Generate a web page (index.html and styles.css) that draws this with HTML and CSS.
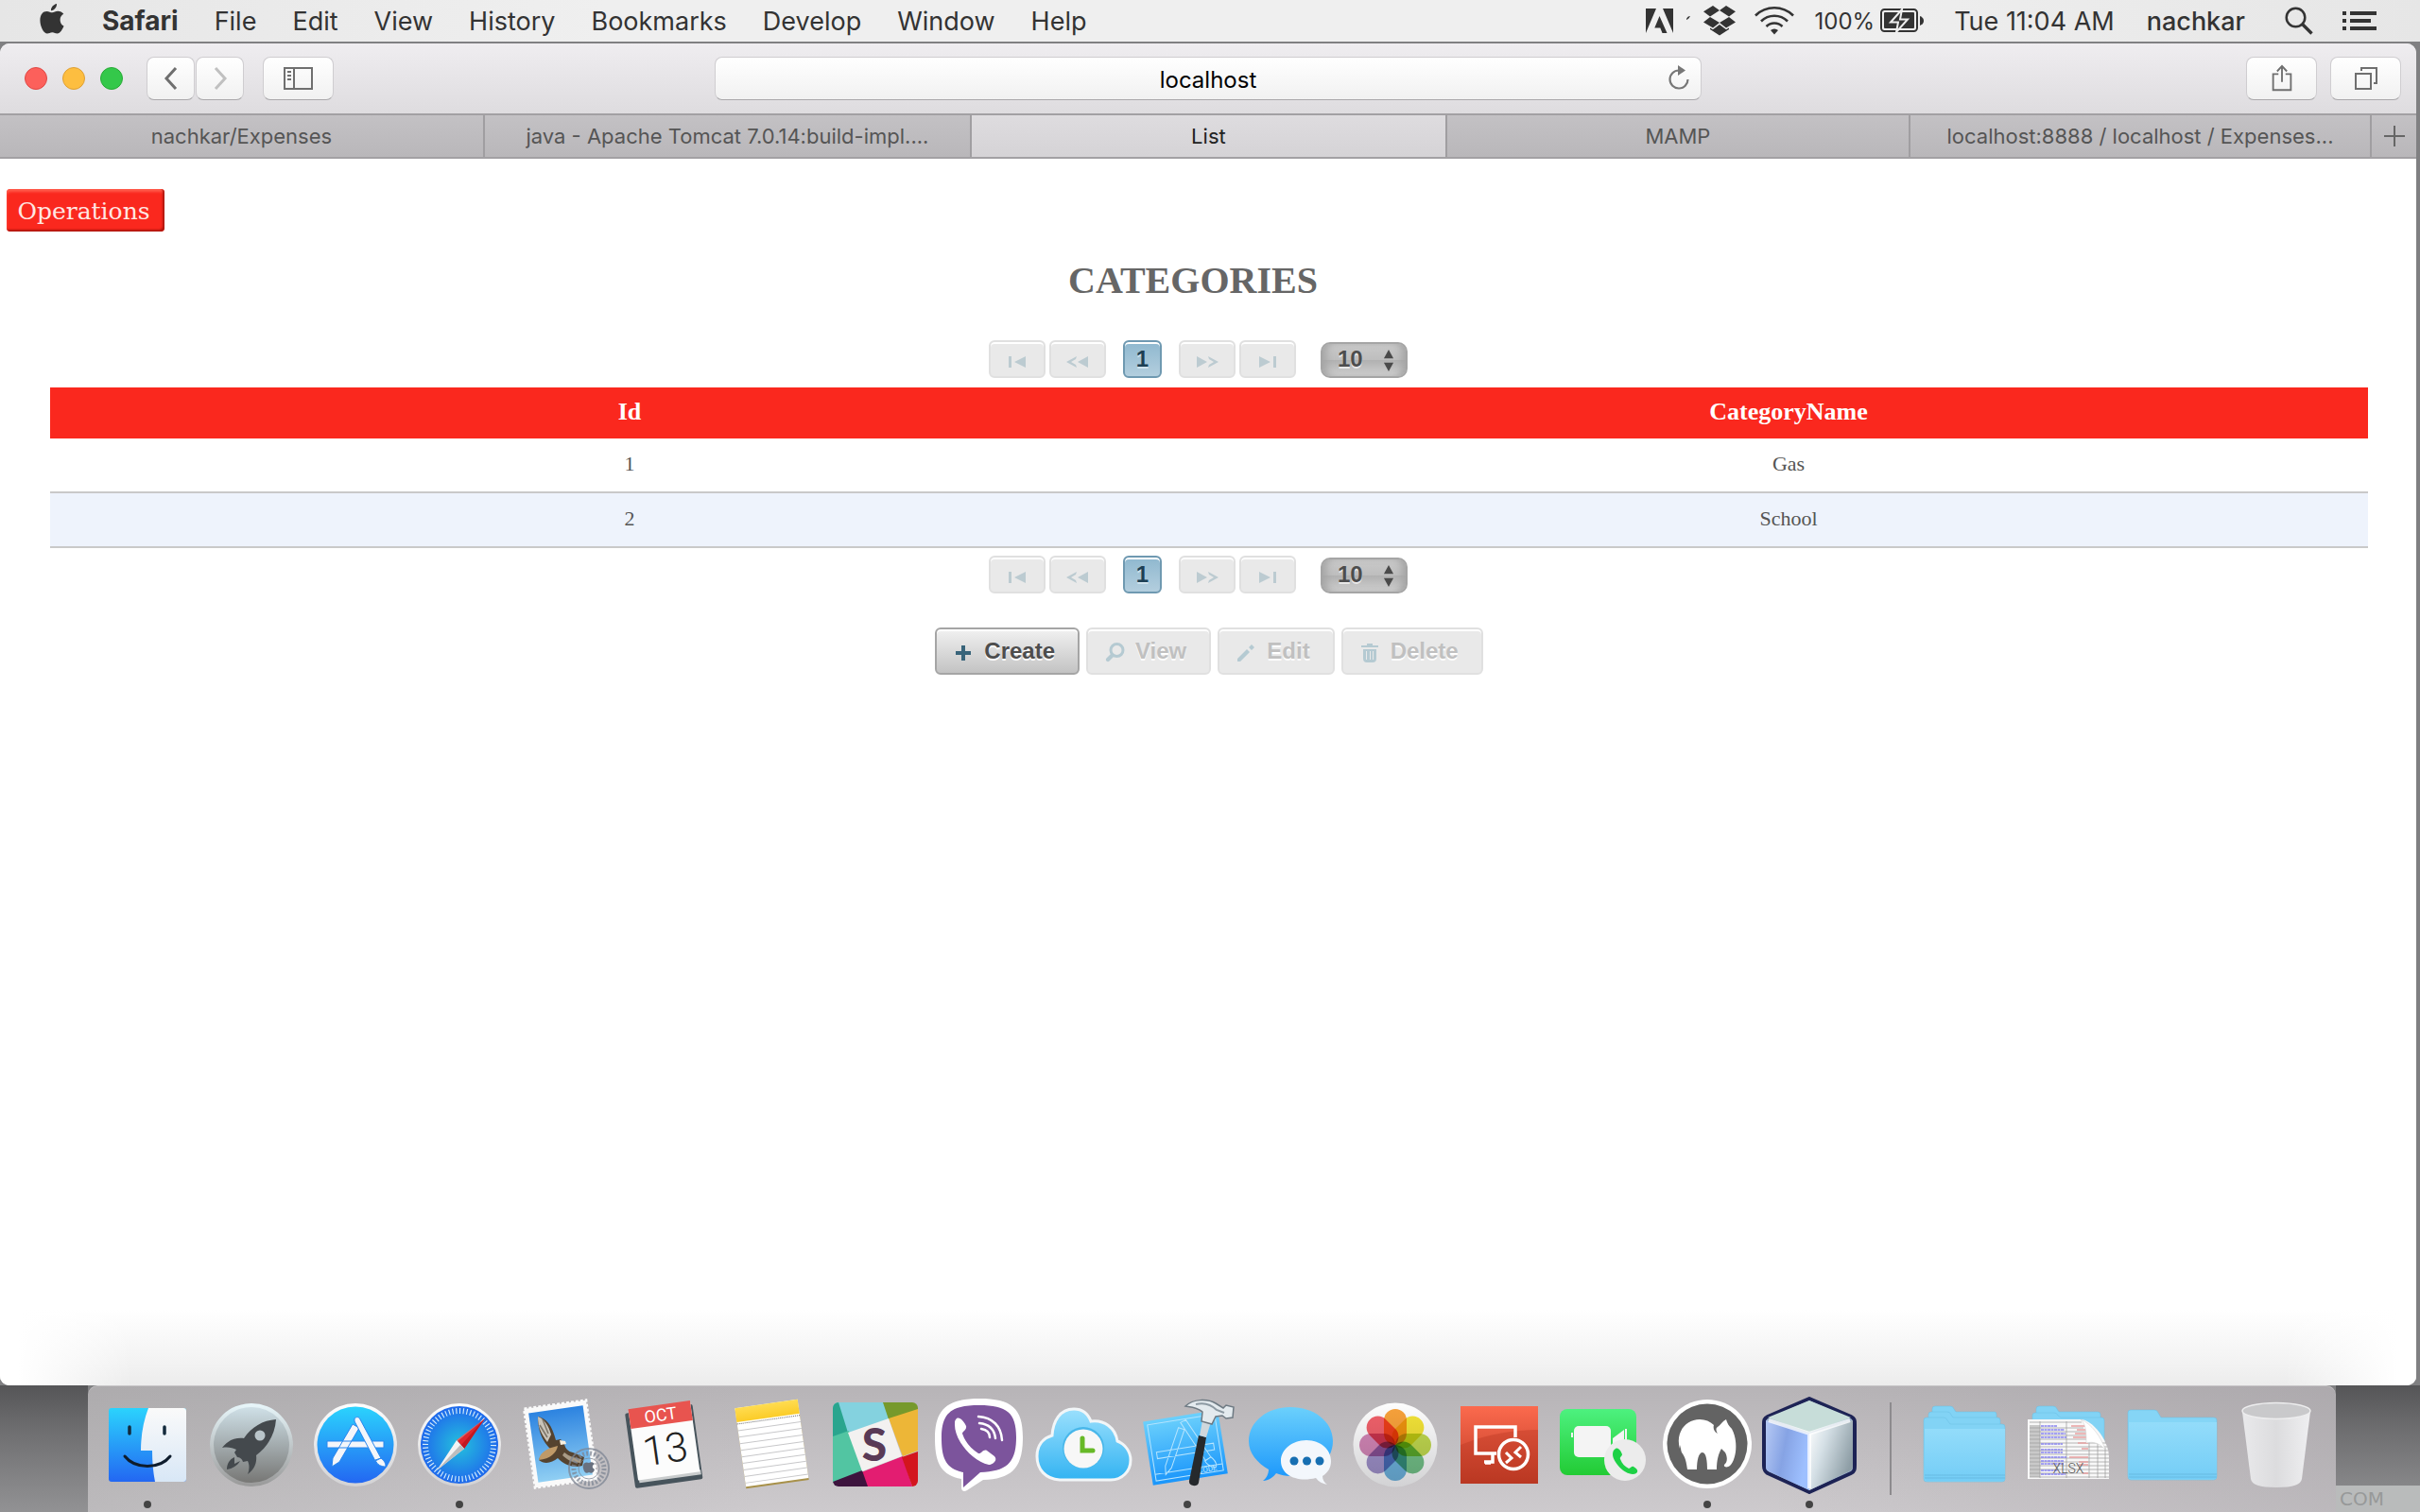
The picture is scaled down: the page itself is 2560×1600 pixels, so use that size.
FILE: index.html
```html
<!DOCTYPE html>
<html lang="en">
<head>
<meta charset="utf-8">
<title>List</title>
<link rel="stylesheet" href="styles.css">
</head>
<body>
<header class="menubar">
  <nav class="menus">
    <svg class="apple" viewBox="0 0 26 32"><path d="M18 0c.3 3.400-2.600 7.300-6 7.200C11.600 4 14.700.6 18 0zM21.600 16.900c0-3 1.600-4.900 3.700-6.100-1.500-2.100-3.700-3-6-3-2.600 0-4.300 1.500-6 1.500-1.700 0-3.600-1.400-5.800-1.400C3.500 7.900.4 11.200.4 17.400.4 24 4.300 31.500 8 31.500c1.900 0 3-1.300 5.300-1.300 2.300 0 3.200 1.300 5.200 1.300 3.200 0 5.900-5 7-8-2.500-1.100-3.900-3.700-3.900-6.600z"/></svg>
    <strong>Safari</strong><span>File</span><span>Edit</span><span>View</span><span>History</span><span>Bookmarks</span><span>Develop</span><span>Window</span><span>Help</span>
  </nav>
  <div class="status">
    <svg class="i-adobe" viewBox="0 0 50 26"><path d="M0 0h11L0 26zM18 0h11v26zM14.500 8l8 18h-5l-2.200-5.500h-6z"/><path d="M43 11c1-2 2-3 4-3-1 2-2 3-4 4z"/></svg>
    <svg class="i-dropbox" viewBox="0 0 34 32"><path d="M10 0l7 5-10 6.500L0 6.200zM24 0l10 6.200-7 5.300L17 5zM7 12l10 6-7 5.500-10-6zM27 12l-10 6 7 5.500 10-6zM7 23.500l3 1.700 7-5.200 7 5.200 3-1.700v1.500L17 31.500 7 25z"/></svg>
    <svg class="i-wifi" viewBox="0 0 42 30"><g fill="none" stroke="#333" stroke-width="2.600"><path d="M1 9.500a28.500 28.500 0 0 1 40 0"/><path d="M7 15.500a20 20 0 0 1 28 0"/><path d="M12.500 21a12 12 0 0 1 17 0"/></g><path d="M21 29.500l-4-4.500a6 6 0 0 1 8 0z"/></svg>
    <span class="battery"><span class="pct">100%</span><svg class="i-batt" viewBox="0 0 46 26"><rect x="1" y="1" width="38" height="23" rx="3.500" fill="none" stroke="#333" stroke-width="2"/><rect x="4" y="4" width="32" height="17" rx="1"/><path d="M42 8c3 1 4 3 4 5s-1 4-4 5z"/><path d="M23 1L11 14.500h8L17 25l12-13.500h-8z" stroke="#eee" stroke-width="2"/></svg></span>
    <span>Tue 11:04 AM</span>
    <span class="user">nachkar</span>
    <svg class="i-search" viewBox="0 0 30 30"><g fill="none" stroke="#333"><circle cx="11.500" cy="11.500" r="9.800" stroke-width="2.500"/><path d="M18.500 18.500L28.500 28.500" stroke-width="3.400"/></g></svg>
    <svg class="i-list" viewBox="0 0 36 22"><path d="M0 1h4v4H0zM8 1h28v4H8zM0 9h4v4H0zM8 9h22v4H8zM0 17h4v4H0zM8 17h28v4H8z"/></svg>
  </div>
</header>

<section class="window">
  <div class="toolbar">
    <div class="tools">
      <span class="light red"></span><span class="light yellow"></span><span class="light green"></span>
      <button class="tool back" aria-label="Back"><svg viewBox="0 0 16 26"><path d="M13 2L3 13l10 11" stroke-width="3"/></svg></button>
      <button class="tool forward" aria-label="Forward"><svg viewBox="0 0 16 26"><path d="M3 2l10 11L3 24" stroke-width="3"/></svg></button>
      <button class="tool wide" aria-label="Sidebar"><svg class="w32" viewBox="0 0 32 26"><path d="M1 2h29v22H1zM11 2v22M4 6h4M4 10h4M4 14h4" stroke-width="2"/></svg></button>
    </div>
    <div class="address">
      <input type="text" value="localhost" aria-label="Address">
      <svg class="reload" viewBox="0 0 24 28"><path d="M12 6.500A9.500 9.500 0 1 0 21.500 16" fill="none" stroke="#777" stroke-width="2.200"/><path d="M11 1v11l8-5.500z" fill="#777"/></svg>
    </div>
    <div class="tools end">
      <button class="tool wide" aria-label="Share"><svg class="w24" viewBox="0 0 24 32"><path d="M8 11H2v18h20V11h-6M12 20V2M6.500 8L12 2l5.500 6" stroke-width="2"/></svg></button>
      <button class="tool wide" aria-label="Show all tabs"><svg class="w24" viewBox="0 0 24 26"><path d="M1 8h16v16H1zM7 5V2h16v16h-3" stroke-width="2"/></svg></button>
    </div>
  </div>
  <nav class="tabs">
    <a href="#" class="t513">nachkar/Expenses</a>
    <a href="#" class="t515">java - Apache Tomcat 7.0.14:build-impl....</a>
    <a href="#" class="t503 active">List</a>
    <a href="#" class="t490">MAMP</a>
    <a href="#" class="t488">localhost:8888 / localhost / Expenses...</a>
    <button class="newtab" aria-label="New tab"><svg viewBox="0 0 22 22"><path d="M11 0v22M0 11h22" stroke="#666" stroke-width="2"/></svg></button>
  </nav>
  <main class="page">
    <button class="operations">Operations</button>
    <div class="content">
      <h1>CATEGORIES</h1>
      <div class="pager">
        <button disabled aria-label="First"><svg viewBox="0 0 24 14"><path d="M3 1h3v12H3zM21 1v12L9 7z"/></svg></button>
        <button disabled aria-label="Previous"><svg viewBox="0 0 24 14"><path d="M23 1v12L12 7zM11 1L0 7l11 6-1-3-5-3 5-3z"/></svg></button>
        <button class="current">1</button>
        <button disabled aria-label="Next"><svg viewBox="0 0 24 14"><path d="M1 1v12l11-6zM13 1l11 6-11 6 1-3 5-3-5-3z"/></svg></button>
        <button disabled aria-label="Last"><svg viewBox="0 0 24 14"><path d="M3 1v12l12-6zM18 1h3v12h-3z"/></svg></button>
        <span class="rows"><select aria-label="Rows per page"><option>10</option></select><svg viewBox="0 0 12 26"><path d="M6 1l5.500 10H.5zM6 26l5.500-10H.5z"/></svg></span>
      </div>
      <table>
        <thead><tr><th>Id</th><th>CategoryName</th></tr></thead>
        <tbody><tr><td>1</td><td>Gas</td></tr><tr><td>2</td><td>School</td></tr></tbody>
      </table>
      <div class="pager lower">
        <button disabled aria-label="First"><svg viewBox="0 0 24 14"><path d="M3 1h3v12H3zM21 1v12L9 7z"/></svg></button>
        <button disabled aria-label="Previous"><svg viewBox="0 0 24 14"><path d="M23 1v12L12 7zM11 1L0 7l11 6-1-3-5-3 5-3z"/></svg></button>
        <button class="current">1</button>
        <button disabled aria-label="Next"><svg viewBox="0 0 24 14"><path d="M1 1v12l11-6zM13 1l11 6-11 6 1-3 5-3-5-3z"/></svg></button>
        <button disabled aria-label="Last"><svg viewBox="0 0 24 14"><path d="M3 1v12l12-6zM18 1h3v12h-3z"/></svg></button>
        <span class="rows"><select aria-label="Rows per page"><option>10</option></select><svg viewBox="0 0 12 26"><path d="M6 1l5.500 10H.5zM6 26l5.500-10H.5z"/></svg></span>
      </div>
      <div class="actions">
        <button><svg viewBox="0 0 24 24"><path d="M10 4h4v6h6v4h-6v6h-4v-6H4v-4h6z" fill="#38647a"/></svg>Create</button>
        <button disabled><svg viewBox="0 0 24 24"><circle cx="14.500" cy="9" r="6.500" fill="none" stroke="#b5cad2" stroke-width="3"/><path d="M9.500 11.500l3 3-6 6c-2 2-5-1-3-3z"/></svg>View</button>
        <button disabled><svg viewBox="0 0 24 24"><path d="M3 18L13 8l3 3L6 21H3zM15 6l3-3 3 3-3 3z"/></svg>Edit</button>
        <button disabled><svg viewBox="0 0 24 24"><path d="M3 4h6V2h6v2h6v2H3zM5 8h14v10q0 4-4 4H9q-4 0-4-4zM8 10v9h1v-9zM12 10v9h1v-9zM16 10v9h-1v-9z" fill-rule="evenodd"/></svg>Delete</button>
      </div>
    </div>
  </main>
</section>

<footer class="desktop">
<span class="side"></span>
<div class="dock">
  <svg class="app" viewBox="0 0 110 134">
    <defs>
      <linearGradient id="blue" x2="0" y2="1"><stop stop-color="#2bd3fd"/><stop offset="1" stop-color="#2367f2"/></linearGradient>
      <linearGradient id="pale" x2="0" y2="1"><stop stop-color="#fafafa"/><stop offset="1" stop-color="#d8e7f6"/></linearGradient>
      <linearGradient id="steel" x2="0" y2="1"><stop stop-color="#cfe0e7"/><stop offset="1" stop-color="#777775"/></linearGradient>
      <linearGradient id="rim" x2="0" y2="1"><stop stop-color="#e8f7fb"/><stop offset="1" stop-color="#999"/></linearGradient>
      <linearGradient id="wrim" x2="0" y2="1"><stop stop-color="#fdfdfd"/><stop offset="1" stop-color="#d2d2d4"/></linearGradient>
      <linearGradient id="sky" x2="0" y2="1"><stop stop-color="#2c83e0"/><stop offset="1" stop-color="#90cff3"/></linearGradient>
      <linearGradient id="cloud" x2="0" y2="1"><stop stop-color="#9be0fd"/><stop offset="1" stop-color="#33b3f2"/></linearGradient>
      <linearGradient id="msg" x2="0" y2="1"><stop stop-color="#6bd0fc"/><stop offset="1" stop-color="#1a96fb"/></linearGradient>
      <linearGradient id="rdp" x2="0" y2="1"><stop stop-color="#fb6a4e"/><stop offset="1" stop-color="#bd3a24"/></linearGradient>
      <linearGradient id="green" x2="0" y2="1"><stop stop-color="#4df17f"/><stop offset="1" stop-color="#22cb34"/></linearGradient>
      <linearGradient id="folder" x2="0" y2="1"><stop stop-color="#93dcfa"/><stop offset="1" stop-color="#74cdf6"/></linearGradient>
      <linearGradient id="yellow" x2="0" y2="1"><stop stop-color="#ffdc51"/><stop offset="1" stop-color="#fbcc28"/></linearGradient>
      <linearGradient id="cubeL" x2="1" y2=".3"><stop stop-color="#b6c9f4"/><stop offset=".5" stop-color="#86a3e4"/><stop offset="1" stop-color="#9ec0ff"/></linearGradient>
      <linearGradient id="cubeR" x2="1" y2=".5"><stop stop-color="#fff"/><stop offset=".4" stop-color="#d5e0e6"/><stop offset="1" stop-color="#8e9ea6"/></linearGradient>
      <linearGradient id="bin"><stop stop-color="#e9e9eb"/><stop offset=".5" stop-color="#dcdcde"/><stop offset="1" stop-color="#efeff1"/></linearGradient>
      <radialGradient id="compass"><stop stop-color="#24c1dd"/><stop offset="1" stop-color="#1f69ec"/></radialGradient>
    </defs>
    <rect x="14" y="24" width="82" height="78" rx="3" fill="url(#blue)"/><path d="M56 24h37a3 3 0 0 1 3 3v72a3 3 0 0 1-3 3H63c-2-10-3-21-3-33H48c0-17 3-32 8-45z" fill="url(#pale)"/><path d="M36 44v7M73 44v7" stroke="#132a3c" stroke-width="3.500" stroke-linecap="round"/><path d="M31 75c11 14 37 14 48 0" fill="none" stroke="#0e1c2c" stroke-width="3" stroke-linecap="round"/><circle class="dot" cx="55" cy="126" r="4"/>
  </svg>
  <svg class="app" viewBox="0 0 110 134"><circle cx="55" cy="63" r="44" fill="url(#rim)"/><circle cx="55" cy="63" r="40" fill="url(#steel)"/><path d="M81 36c-14 1-26 8-34 20-9-1-17 2-23 10 6-1 11 0 15 2l-2 3 3 5c3 0 5 2 6 5l5-1c2 4 2 9 0 14 7-5 10-12 9-20 12-9 20-22 21-38z" fill="#44494d"/><circle cx="64" cy="53" r="5.500" fill="#b9c4c9"/><path d="M37 76c-5 2-8 7-8 13 6-1 11-4 14-9l-6 3z" fill="#44494d"/></svg>
  <svg class="app" viewBox="0 0 110 134"><circle cx="55" cy="63" r="44" fill="url(#wrim)"/><circle cx="55" cy="63" r="40.500" fill="url(#blue)"/><g fill="#f4f6fa"><path d="M25 59h60v7H25zM52 41l7 4-21 36-8 5 1-9z" stroke="#2a86ee"/><path d="M54 35c2-2 5-2 6 1l22 41-6 3-22-42zM76 79l6-2c4 3 5 6 5 9-5 0-9-2-11-7z" stroke="#2a86ee"/></g></svg>
  <svg class="app" viewBox="0 0 110 134"><circle cx="55" cy="63" r="44" fill="url(#wrim)"/><circle cx="55" cy="63" r="41" fill="url(#compass)"/><circle cx="55" cy="63" r="36" fill="none" stroke="#d6edfb" stroke-width="6" pathLength="120" stroke-dasharray=".6 1.400"/><path d="M82 35L60 67l-7-8z" fill="#e0262d"/><path d="M82 35L53 59l-1-1z" fill="#ff5b52"/><path d="M82 35L60 67l-3-4z" fill="#c21820"/><path d="M31 90l21-32 8 9z" fill="#f3f3f3"/><path d="M31 90l29-23-4-4z" fill="#bdbdbd"/><circle class="dot" cx="55" cy="126" r="4"/></svg>
  <svg class="app" viewBox="0 0 110 134"><g transform="rotate(-8 52 62)"><rect x="19" y="20" width="66" height="84" fill="#fafafa" stroke="#fafafa" stroke-width="3" stroke-dasharray="3 2"/><rect x="23" y="25" width="58" height="74" fill="url(#sky)"/></g><path d="M28 33c9 2 15 9 19 25l5-1 4 5c1 5 4 8 9 9l12 5-2 9c-10 3-19-1-26-8-6 5-14 7-20 2 2-6 7-10 12-12-8-8-13-18-13-34z" fill="#55432f"/><path d="M28 33c7 3 11 9 14 19l-4 8c-6-8-10-15-10-27z" fill="#c9c3b8"/><path d="M33 36l6 15M30 42l8 13" stroke="#7d7568" stroke-width="1.500"/><path d="M51 58l6 1 1 3-6 1z" fill="#f7efe0"/><path d="M49 64c-1 7-8 14-20 15 1-7 7-11 13-13z" fill="#c09a68"/><path d="M56 71c5 4 11 6 18 7l-1 4c-8 0-14-3-19-8z" fill="#a99b86"/><g fill="none" stroke="#7e8694" opacity=".75"><circle cx="82" cy="88" r="21" stroke-width="2"/><circle cx="82" cy="88" r="16" stroke-width="5" stroke-dasharray="2 2"/><circle cx="82" cy="88" r="11"/></g><path d="M82 82c-5-2-7 2-6 6s3 6 6 4c3 2 5 0 6-3-3-2-3-4 0-6-2-2-4-2-6-1z" fill="#69717f"/></svg>
  <svg class="app" viewBox="0 0 110 134"><g transform="rotate(-8 54 62)"><rect x="15" y="24" width="72" height="80" rx="2" fill="#47545c"/><rect x="20" y="94" width="66" height="5" fill="#c9cccd"/><rect x="19" y="22" width="66" height="74" fill="#fcfcfc"/><rect x="19" y="20" width="66" height="21" fill="#e8544f"/><text x="52" y="37" class="cal-month">OCT</text><text x="52" y="82" class="cal-day">13</text></g></svg>
  <svg class="app" viewBox="0 0 110 134"><g transform="rotate(-8 56 62)"><rect x="22" y="21" width="67" height="84" fill="#a8914a"/><rect x="22" y="19" width="67" height="84" fill="#fff"/><rect x="22" y="19" width="67" height="15" fill="url(#yellow)"/><path d="M22 36h67" stroke="#666" stroke-dasharray="1 1"/><path d="M22 43h67M22 50h67M22 57h67M22 64h67M22 71h67M22 78h67M22 85h67M22 92h67M22 99h67" stroke="#c8c8ca"/></g></svg>
  <svg class="app" viewBox="0 0 110 134"><clipPath id="sq"><rect x="10" y="18" width="90" height="89" rx="6"/></clipPath><g clip-path="url(#sq)"><path fill="#84d2df" d="M10 18h60v32H10z"/><path fill="#2aa58e" d="M10 18h6l10 32-16 6z"/><path fill="#76992b" d="M63 18h37v8L69 36z"/><path fill="#edb637" d="M100 25L69 35l15 40 16-6z"/><path fill="#52c5a2" d="M10 54l17-6 15 43-32 12z"/><path fill="#e31d71" d="M40 92l44-17 10 32H45z"/><path fill="#d3151e" d="M83 76l17-6v37h-6z"/><path fill="#3d143e" d="M10 102l31-12 6 17H10z"/><path fill="#f3f1f0" d="M26 50l43-15 14 40-42 16z"/></g><text x="54" y="80" class="slack">S</text></svg>
  <svg class="app" viewBox="0 0 110 134"><path d="M55 14c34 0 46 10 46 41 0 33-12 44-42 45L42 111c-3 2-6 1-6-3v-9C15 95 8 83 8 56c0-31 13-42 47-42z" fill="#fff"/><path d="M55 21c29 0 39 8 39 34 0 27-10 36-38 37L38 108V92C20 88 15 78 15 56c0-27 10-35 40-35z" fill="#7c549c"/><path d="M31 35c4-2 8 4 10 8 1 4-4 6-4 8 3 9 9 16 17 21 3 1 5-5 9-3l8 6c4 4-2 9-6 9C47 80 29 58 29 42c0-4 0-5 2-7z" fill="#fff"/><g fill="none" stroke="#fff" stroke-width="2.500" stroke-linecap="round"><path d="M54 33c15 1 24 10 25 25M55 40c11 1 16 7 17 16M57 46c6 1 9 4 9 9"/></g></svg>
  <svg class="app" viewBox="0 0 110 134"><path d="M30 100C15 99 6 89 6 75c0-11 6-19 16-22 1-15 8-28 23-28 9 0 15 5 18 13 14-2 26 7 28 21 8 3 14 11 14 20 0 12-9 21-21 21z" fill="url(#cloud)" stroke="#f2f6f8" stroke-width="3"/><circle cx="55" cy="66" r="22" fill="#48b7ea"/><circle cx="55" cy="67" r="20.500" fill="#f7f7f7"/><path d="M54 56v13h11" fill="none" stroke="#67b927" stroke-width="5" stroke-linecap="round"/></svg>
  <svg class="app" viewBox="0 0 110 134"><g transform="rotate(-9 52 66)"><rect x="13" y="32" width="80" height="68" fill="url(#msg)"/><g fill="none" stroke="#b6e4fd"><rect x="17" y="36" width="72" height="60"/><path d="M22 66h61v7H22zM49 44l6 3-20 38-7 6 1-9zM52 39l6-2 20 43-6 3zM71 83l7-3c4 4 5 8 4 11-5 0-9-3-11-8zM17 89h72"/></g><text x="70" y="95" class="xcode">XCODE</text></g><path d="M67 53l8 2-8 48c-1 5-11 4-10-2z" fill="#26292c"/><path d="M73 27l10 2-8 26-7-2z" fill="#cfd7dc"/><path d="M53 22c8-8 24-8 32-3l8 5 3-3 8 2-1 11-7 1-4-3-7 1-4 8-11-3 1-10c-6-5-12-5-18-6z" fill="#e3eaee" stroke="#6e7a83" stroke-width="1.500"/><path d="M64 20c8-2 16 0 22 6l8 3" fill="none" stroke="#8d9aa3" stroke-width="2"/><circle class="dot" cx="55" cy="126" r="4"/></svg>
  <svg class="app" viewBox="0 0 110 134"><path d="M54 23c25 0 45 15 45 36S79 96 54 96c-5 0-10-1-15-3-3 4-8 8-14 8 4-3 6-8 6-12-12-7-21-17-21-30 0-21 20-36 44-36z" fill="url(#msg)"/><path d="M71 58c15 0 26 10 26 22 0 7-3 12-9 16 0 4 2 7 5 9-5-1-9-3-12-7-20 5-37-3-37-18 0-12 12-22 27-22z" fill="#f3f7fc"/><g fill="#176fb2"><circle cx="58" cy="80" r="4.500"/><circle cx="71.500" cy="80" r="4.500"/><circle cx="85" cy="80" r="4.500"/></g></svg>
  <svg class="app petals" viewBox="0 0 110 134"><circle cx="55" cy="63" r="44.500" fill="url(#wrim)"/><rect x="43" y="25" width="24" height="38" rx="12" fill="#f9a33b"/><rect x="43" y="25" width="24" height="38" rx="12" fill="#f4e437" transform="rotate(45 55 63)"/><rect x="43" y="25" width="24" height="38" rx="12" fill="#c2da4f" transform="rotate(90 55 63)"/><rect x="43" y="25" width="24" height="38" rx="12" fill="#74c389" transform="rotate(135 55 63)"/><rect x="43" y="25" width="24" height="38" rx="12" fill="#6fb5e0" transform="rotate(180 55 63)"/><rect x="43" y="25" width="24" height="38" rx="12" fill="#a092cb" transform="rotate(225 55 63)"/><rect x="43" y="25" width="24" height="38" rx="12" fill="#d487b7" transform="rotate(270 55 63)"/><rect x="43" y="25" width="24" height="38" rx="12" fill="#f2616b" transform="rotate(315 55 63)"/></svg>
  <svg class="app" viewBox="0 0 110 134"><rect x="14" y="22" width="82" height="82" fill="url(#rdp)"/><path d="M14 63c25-10 52-16 82-16v57H14z" fill="#b5341f" opacity=".35"/><g fill="none" stroke="#fff" stroke-width="3.500"><path d="M72 55V44H30v28h22M48 72v9h-9M46 82h-6"/><circle cx="70" cy="73" r="15.500"/></g><path d="M62 71l6 6-6 5M78 65l-6 6 6 5" fill="none" stroke="#fff" stroke-width="3"/></svg>
  <svg class="app" viewBox="0 0 110 134"><rect x="9" y="25" width="81" height="70" rx="8" fill="url(#green)"/><rect x="24" y="43" width="39" height="33" rx="5" fill="#f4f4f4"/><path d="M65 56l12-9v23l-12-9zM78 46h2v24h-2zM21 50h2v5h-2z" fill="#f4f4f4"/><circle cx="78" cy="79" r="22" fill="#ececec"/><path d="M68 67c3-2 6 3 7 6 0 2-3 3-2 5 2 5 5 8 9 10 2 0 3-3 5-2 3 2 6 4 3 7-9 5-25-11-25-20 0-3 1-5 3-6z" fill="#1ed146"/></svg>
  <svg class="app" viewBox="0 0 110 134"><circle cx="55" cy="62" r="47" fill="#fff"/><circle cx="55" cy="62" r="42.500" fill="#636363"/><path d="M28 71c-1-2-1-5-1-8l-1 4c-5-17 6-31 21-31 6 0 11 2 15 6-1 3 0 7 4 9-2-3-2-6 0-7 3-2 5-6 9-8 1 4 3 7 6 10 7 13 5 32-2 39-2 2-7 2-6-1 3-2 4-7 1-13l-4-4c-3 5-5 12-5 22H55c0-8-1-18-5-18s-6 8-6 18H34c-1-7-2-13-6-18z" fill="#fff"/><circle class="dot" cx="55" cy="126" r="4"/></svg>
  <svg class="app" viewBox="0 0 110 134"><path d="M53 14L97 33c4 2 4 4 4 8v43c0 5 0 7-4 9l-44 20L9 93c-3-2-4-4-4-8V41c0-4 0-6 4-8z" fill="#9fb4cc" stroke="#1d2355" stroke-width="4" stroke-linejoin="round"/><path d="M53 16l44 18-44 16L9 34z" fill="#c7ddd9"/><path d="M7 37l46 14v60L10 91c-2-1-3-2-3-5z" fill="url(#cubeL)"/><path d="M53 51l46-14v47c0 4-1 6-4 7l-42 20z" fill="url(#cubeR)"/><path d="M10 37l43 14 43-14M53 51v58" fill="none" stroke="#fff" stroke-width="4" opacity=".75"/><circle class="dot" cx="53" cy="126" r="4"/></svg>
  <span class="divider"></span>
  <svg class="app" viewBox="0 0 110 134"><g fill="#82d3f5" stroke="#68bce2" stroke-width=".5"><path d="M21 98V25q0-3 3-3h16q3 0 4 3l2 3h41q2 0 2 3v67z"/><path d="M17 98V31q0-3 3-3h17q3 0 4 3l2 3h47q3 0 3 3v61z"/><path d="M12 99V37q0-3 3-3h18q3 0 4 3l3 4h55q3 0 3 3v55q0 3-3 3H15q-3 0-3-3z"/></g><path d="M13 46h85v52q0 3-3 3H16q-3 0-3-3z" fill="url(#folder)"/><path d="M13 95h85M13 98h85" stroke="#68bbe2"/></svg>
  <svg class="app" viewBox="0 0 110 134"><g fill="#82d3f5" stroke="#68bce2" stroke-width=".5"><path d="M21 70V25q0-3 3-3h15q3 0 4 3l2 3h41q3 0 3 3v39z"/><path d="M17 80V32q0-3 3-3h20q3 0 4 3l3 2h43q3 0 3 3v50z"/></g><path d="M12 36h56c12 0 30 22 30 40v23H12z" fill="#f8f8f8"/><path d="M14 42h11v55H14z" fill="#c9c9c9"/><path d="M14 39h55M14 45h57M14 49h60M14 53h64M14 57h69M14 61h81M14 65h82M14 69h83M14 73h84M14 77h84M14 81h84M14 85h84M14 89h84M14 93h84M14 97h84M25 38v60M53 38v60M77 55v43M86 60v38M94 66v32" stroke="#999" stroke-width=".7"/><path d="M26 43h17M26 47h25M26 51h26M26 55h27M26 62h23M26 68h23M26 71h23M26 76h27M26 80h24M26 83h24M26 90h18M26 94h26" stroke="#8783ee" stroke-width="1.500" stroke-dasharray="3 .5"/><path d="M58 43h16M64 47h11M62 51h14M60 55h16M65 61h11M69 67h7M56 76h20M66 81h10M66 84h10M70 93h6" stroke="#e8a0a0" stroke-width="1.500"/><path d="M68 36c6 5 6 15 6 25 7-2 14 0 20 7-4-13-15-28-26-32z" fill="#fff" stroke="#ccc" stroke-width=".5"/><text x="55" y="93" class="xlsx">XLSX</text></svg>
  <svg class="app" viewBox="0 0 110 134"><path d="M8 96V29q0-3 3-3h25q3 0 4 3l3 5h56q3 0 3 3v59q0 4-3 4H11q-3 0-3-4z" fill="#85d5f6" stroke="#68bce2" stroke-width=".5"/><path d="M9 39h93v57q0 3-3 3H12q-3 0-3-3z" fill="url(#folder)"/><path d="M9 94h93M9 97h93" stroke="#68bbe2"/></svg>
  <svg class="app" viewBox="0 0 110 134"><path d="M19 28l9 71c1 6 9 9 27 9s26-3 27-9l9-71z" fill="url(#bin)"/><ellipse cx="55" cy="27" rx="36" ry="8.500" fill="#c9c9cb" stroke="#ededee" stroke-width="1.500"/></svg>
</div>
<span class="side right"><span>COM</span></span>
</footer>
</body>
</html>
```
FILE: styles.css
```css
* { box-sizing: border-box; }
body {
  margin: 0;
  min-height: 100vh;
  display: flex;
  flex-direction: column;
  background: #808082;
  font-family: Inter, "Liberation Sans", sans-serif;
  font-size: 27px;
  color: #333;
}
button, input, select { font: inherit; color: inherit; margin: 0; padding: 0; }
svg { display: block; flex: none; }

/* menu bar */
.menubar {
  height: 46px;
  padding: 0 46px 0 42px;
  display: flex;
  justify-content: space-between;
  align-items: center;
  background: linear-gradient(90deg, #e6e6e6, #efefef 25%, #efefef 75%, #e6e6e6);
  border-bottom: 2px solid #808082;
  white-space: nowrap;
}
.menus { display: flex; align-items: center; gap: 38px; }
.menus strong { font-size: 28px; font-weight: 700; }
.apple { width: 26px; height: 32px; margin: 0 2px 4px 0; fill: #333; }
.status { display: flex; align-items: center; fill: #333; }
.i-adobe { width: 50px; height: 26px; margin-right: 11px; }
.i-dropbox { width: 34px; height: 32px; margin-right: 20px; }
.i-wifi { width: 42px; height: 30px; margin-right: 22px; }
.battery { display: flex; align-items: center; gap: 6px; margin-right: 32px; }
.pct { font-size: 24px; }
.i-batt { width: 46px; height: 26px; }
.user { font-weight: 500; margin: 0 42px 0 34px; }
.i-search { width: 30px; height: 30px; margin-right: 31px; }
.i-list { width: 36px; height: 22px; }

/* browser window */
.window {
  flex: 1;
  margin-right: 4px;
  display: flex;
  flex-direction: column;
  background: #fff;
  border-radius: 10px;
  overflow: hidden;
}
.toolbar {
  height: 74px;
  display: grid;
  grid-template-columns: 1fr minmax(0, 1044px) 1fr;
  align-items: center;
  background: linear-gradient(#efedf0, #dedcdf);
}
.tools { display: flex; align-items: center; padding-left: 26px; }
.tools.end { justify-content: flex-end; gap: 14px; padding: 0 16px 0 0; }
.light { width: 24px; height: 24px; border-radius: 50%; margin-right: 16px; }
.red { background: #fc605b; border: 1px solid #df4744; }
.yellow { background: #fdbe40; border: 1px solid #de9f34; }
.green { background: #34c84a; border: 1px solid #27aa35; margin-right: 25px; }
.tool, .address input {
  height: 46px;
  border: 1px solid #cfcdd0;
  border-bottom-color: #a9a7aa;
  border-radius: 8px;
  background: linear-gradient(#fff, #f1f1f1);
}
.tool { width: 51px; display: flex; justify-content: center; align-items: center; }
.tool svg { width: 16px; height: 26px; fill: none; stroke: #6f6f6f; }
.tool .w32 { width: 32px; }
.tool .w24 { width: 24px; height: 30px; }
.back { margin-right: 1px; }
.forward { margin-right: 20px; }
.forward svg { stroke: #c0c0c0; }
.wide { width: 75px; }
.address { position: relative; }
.address input { display: block; width: 100%; padding-top: 3px; text-align: center; font-size: 24px; color: #000; }
.reload { position: absolute; right: 12px; top: 8px; width: 24px; height: 28px; }

.tabs {
  height: 48px;
  display: flex;
  border: solid #a2a0a3;
  border-width: 2px 0;
  background: linear-gradient(#c3c1c4, #b9b7ba);
  font-size: 22px;
}
.tabs a {
  flex: 500 1 0;
  display: flex;
  justify-content: center;
  align-items: center;
  border-right: 2px solid #a09ea1;
  color: #555;
  text-decoration: none;
  white-space: nowrap;
}
.tabs .t513 { flex-grow: 513; }
.tabs .t515 { flex-grow: 515; }
.tabs .t503 { flex-grow: 503; }
.tabs .t490 { flex-grow: 490; }
.tabs .t488 { flex-grow: 488; }
.tabs .active { background: linear-gradient(#dedcdf, #d5d3d6); color: #222; }
.newtab { width: 47px; border: 0; background: none; display: flex; justify-content: center; align-items: center; }
.newtab svg { width: 22px; height: 22px; }

/* page */
.page {
  flex: 1;
  padding: 32px 0 0;
  background: linear-gradient(90deg, #fff 20px, transparent 140px calc(100% - 140px), #fff calc(100% - 20px)),
    linear-gradient(0deg, #ececec, #f3f3f3 26px, #fff 80px);
}
.operations {
  display: block;
  width: 167px;
  height: 45px;
  margin-left: 7px;
  padding: 2px 4px 0 0;
  border: 0;
  border-radius: 4px;
  background: #fa281e;
  box-shadow: inset -2px -2px 2px #b0160e, inset 0 3px 3px #ff5c4c;
  color: #ffe6e2;
  font-family: "DejaVu Serif", serif;
  font-size: 25px;
}
.content { margin: 28px 51px 0 53px; font-family: "Liberation Serif", serif; color: #555; }
h1 { margin: 0 34px 39px 0; font-size: 40px; line-height: 48px; text-align: center; color: #666; }
.pager {
  display: flex;
  justify-content: center;
  margin: 0 23px 10px 0;
  font-family: "Liberation Sans", sans-serif;
  font-size: 24px;
  font-weight: bold;
}
.pager button, .actions button {
  border: 2px solid #e0e0e0;
  border-radius: 6px;
  background: #e9e9e9;
  box-shadow: inset 0 2px 0 #fff;
  color: #c0c0c0;
  text-shadow: 0 2px 0 #fff;
}
.pager button { width: 60px; height: 40px; margin-right: 4px; display: flex; justify-content: center; align-items: center; }
.pager button svg { width: 24px; height: 14px; margin-top: 6px; fill: #bccbd1; }
.pager .current {
  width: 41px;
  margin: 0 18px 0 14px;
  border-color: #6f99b1;
  background: linear-gradient(#8fb8cf, #b3cede);
  color: #1d3f54;
  text-shadow: 0 2px 0 #cfe2ec;
}
.rows { position: relative; margin: 2px 0 0 22px; }
.rows select {
  appearance: none;
  display: block;
  width: 92px;
  height: 38px;
  padding: 0 0 3px 16px;
  border: 2px solid #a5a5a5;
  border-radius: 10px;
  background: linear-gradient(#cacaca, #bebebe 49%, #b1b1b1 51%, #d0d0d0);
  box-shadow: inset 8px 0 8px -4px #a4a4a4, inset -8px 0 8px -4px #a4a4a4;
  color: #4d4d4d;
  text-shadow: 0 2px 0 #e8e8e8;
}
.rows svg { position: absolute; right: 14px; top: 7px; width: 12px; height: 24px; fill: #4a4a4a; pointer-events: none; }

table { width: 100%; border-collapse: collapse; table-layout: fixed; text-align: center; font-size: 22px; }
th { height: 54px; padding: 0 0 2px; background: #fa281e; color: #fff; font-size: 26px; }
td { height: 58px; padding: 0 0 4px; }
tbody tr { box-shadow: inset 0 -2px 0 #c9c9c9; }
tbody tr:nth-child(even) { background: #eef3fc; }
.pager.lower { margin-top: 8px; margin-bottom: 36px; }
.actions { display: flex; justify-content: center; gap: 7px; font-family: "Liberation Sans", sans-serif; font-size: 24px; font-weight: bold; }
.actions button { height: 50px; padding: 0 24px 0 16px; display: flex; align-items: center; gap: 10px; }
.actions button:enabled { border-color: #a5a5a5; background: linear-gradient(#f1f1f1, #c3c3c3); color: #4d4d4d; }
.actions svg { width: 24px; height: 24px; margin-top: 4px; fill: #b5cad2; }

/* dock */
.desktop { display: flex; }
.side { flex: 93 1 0; background: linear-gradient(180deg, #555557, #6e6e70 35%, #929294); }
.side.right { flex-grow: 89; display: flex; flex-direction: column; justify-content: flex-end; }
.side.right span { height: 28px; background: #b9bbbb; color: #979999; font: 20px/28px "DejaVu Sans", sans-serif; padding-left: 4px; }
.dock {
  display: flex;
  padding: 0 8px;
  border-radius: 10px 10px 0 0;
  background: linear-gradient(90deg, rgba(150,150,150,.3), transparent 30% 75%, rgba(150,145,150,.3)), linear-gradient(#b7b4b7, #cdcacd);
  box-shadow: inset 0 1px 0 #c6c4c6;
}
.app { width: 110px; height: 134px; }
.dot { fill: #444; }
.divider { width: 2px; margin: 18px 22px 18px 28px; background: #8d8b8e; }
.petals { isolation: isolate; }
.petals rect { mix-blend-mode: multiply; }
.cal-month { font: 18px Roboto, sans-serif; fill: #fff; text-anchor: middle; }
.cal-day { font: 300 43px Roboto, sans-serif; fill: #222; text-anchor: middle; }
.slack { font: 900 48px Lato, sans-serif; fill: #593a56; text-anchor: middle; }
.xcode { font: 8px Roboto, sans-serif; fill: #b6e4fd; text-anchor: middle; }
.xlsx { font: 300 14px Roboto, sans-serif; fill: #555; text-anchor: middle; }
```
